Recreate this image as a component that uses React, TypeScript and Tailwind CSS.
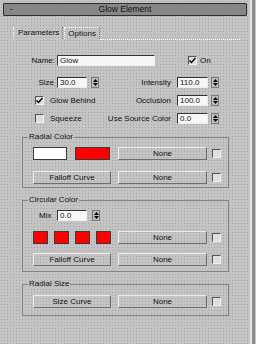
const bg =
  "bg-[#c4c4c4] bg-[radial-gradient(#a4a4a4_0.7px,transparent_0.8px)] bg-[length:3px_3px]";

const Check = ({ on }: { on?: boolean }) => (
  <div className="w-[9px] h-[9px] shrink-0 bg-[#dedede] border border-t-[#555] border-l-[#555] border-b-[#f0f0f0] border-r-[#f0f0f0] flex items-center justify-center">
    {on && (
      <svg width="7" height="7" viewBox="0 0 7 7">
        <path d="M0.5 3.5 L2.5 5.5 L6.5 1" stroke="#000" strokeWidth="1.4" fill="none" />
      </svg>
    )}
  </div>
);

const Arrows = () => (
  <div className="w-[8px] h-[11px] shrink-0 border border-[#7a7a7a] bg-[#bdbdbd] flex flex-col items-center justify-center gap-[1px]">
    <svg width="5" height="3" viewBox="0 0 5 3">
      <path d="M2.5 0 L5 3 L0 3 Z" fill="#000" />
    </svg>
    <svg width="5" height="3" viewBox="0 0 5 3">
      <path d="M0 0 L5 0 L2.5 3 Z" fill="#000" />
    </svg>
  </div>
);

const Field = ({ value, w }: { value: string; w: string }) => (
  <div
    className={`${w} h-[11px] shrink-0 bg-[#f7f7f7] border border-t-[#333] border-l-[#333] border-b-[#eee] border-r-[#eee] pl-[2px] leading-[9px]`}
  >
    {value}
  </div>
);

const Btn = ({ label, w }: { label: string; w: string }) => (
  <div
    className={`${w} h-[13px] shrink-0 border border-t-[#ececec] border-l-[#ececec] border-b-[#6e6e6e] border-r-[#6e6e6e] flex items-center justify-center`}
  >
    {label}
  </div>
);

const Swatch = ({ color, w }: { color: string; w: string }) => (
  <div className={`${w} h-[13px] shrink-0 border border-[#3a3a3a] ${color}`} />
);

const RightSpin = ({ label, value }: { label: string; value: string }) => (
  <div className="flex items-center">
    <div className="w-[73px] text-right pr-[1px]">{label}</div>
    <div className="ml-[5px]">
      <Field value={value} w="w-[31px]" />
    </div>
    <div className="ml-[3px]">
      <Arrows />
    </div>
  </div>
);

const MapRow = ({ left }: { left: React.ReactNode }) => (
  <div className="flex items-center h-[13px]">
    <div className="w-[78px] flex items-center gap-[8px]">{left}</div>
    <div className="ml-[7px]">
      <Btn label="None" w="w-[89px]" />
    </div>
    <div className="ml-[5px]">
      <Check />
    </div>
  </div>
);

const Group = ({ title, className, children }: { title: string; className: string; children: React.ReactNode }) => (
  <div className={`relative ml-[22px] w-[207px] border border-[#858585] pl-[10px] ${className}`}>
    <span className={`absolute left-[5px] -top-[6px] px-[1px] leading-[10px] ${bg}`}>{title}</span>
    {children}
  </div>
);

export default function App() {
  return (
    <div className={`w-[256px] h-[344px] overflow-hidden flex text-[8px] text-[#111] font-['Liberation_Sans',Arial,sans-serif] ${bg}`}>
      <div className="w-[250px] flex flex-col">
        {/* rollout title */}
        <div className="mt-[3px] ml-[3px] w-[244px] h-[13px] border border-[#2e2e2e] rounded-[1px] bg-[#a2a2a2] bg-[radial-gradient(#858585_0.7px,transparent_0.8px)] bg-[length:2px_2px] relative flex items-center justify-center text-[8.5px]">
          <span className="absolute left-[6px] top-[-1px]">-</span>
          <span>Glow Element</span>
        </div>

        {/* tabs */}
        <div className="mt-[11px] ml-[13px] h-[12px] flex items-stretch">
          <div className="border-l border-dotted border-l-white border-r border-r-[#7a7a7a] pl-[4px] pr-[3px] flex items-center">
            Parameters
          </div>
          <div className="ml-[1px] border-l border-t border-dotted border-white border-r border-r-[#7a7a7a] pl-[3px] pr-[3px] flex items-center">
            Options
          </div>
        </div>
        <div className="ml-[100px] w-[140px] border-t border-dotted border-white" />

        {/* name row */}
        <div className="mt-[15px] h-[11px] flex items-center">
          <div className="w-[55px] text-right">Name:</div>
          <div className="ml-[2px]">
            <Field value="Glow" w="w-[98px]" />
          </div>
          <div className="ml-[33px]">
            <Check on />
          </div>
          <span className="ml-[3px]">On</span>
        </div>

        {/* size / intensity */}
        <div className="mt-[11px] h-[11px] flex items-center">
          <div className="w-[54px] text-right">Size</div>
          <div className="ml-[3px]">
            <Field value="30.0" w="w-[30px]" />
          </div>
          <div className="ml-[4px]">
            <Arrows />
          </div>
          <RightSpin label="Intensity" value="110.0" />
        </div>

        {/* glow behind / occlusion */}
        <div className="mt-[7px] h-[11px] flex items-center">
          <div className="w-[99px] pl-[35px] flex items-center">
            <Check on />
            <span className="ml-[6px]">Glow Behind</span>
          </div>
          <RightSpin label="Occlusion" value="100.0" />
        </div>

        {/* squeeze / use source color */}
        <div className="mt-[7px] h-[11px] flex items-center">
          <div className="w-[99px] pl-[35px] flex items-center">
            <Check />
            <span className="ml-[6px]">Squeeze</span>
          </div>
          <RightSpin label="Use Source Color" value="0.0" />
        </div>

        <Group title="Radial Color" className="mt-[13px] pt-[9px] pb-[3px]">
          <MapRow
            left={
              <>
                <Swatch color="bg-white" w="w-[34px]" />
                <Swatch color="bg-[#ff0000]" w="w-[35px]" />
              </>
            }
          />
          <div className="mt-[11px]">
            <MapRow left={<Btn label="Falloff Curve" w="w-[78px]" />} />
          </div>
        </Group>

        <Group title="Circular Color" className="mt-[12px] pt-[9px] pb-[5px]">
          <div className="h-[11px] flex items-center">
            <div className="w-[24px] pl-[6px]">Mix</div>
            <Field value="0.0" w="w-[30px]" />
            <div className="ml-[5px]">
              <Arrows />
            </div>
          </div>
          <div className="mt-[10px]">
            <MapRow
              left={
                <div className="flex gap-[6px]">
                  <Swatch color="bg-[#ff0000]" w="w-[15px]" />
                  <Swatch color="bg-[#ff0000]" w="w-[15px]" />
                  <Swatch color="bg-[#ff0000]" w="w-[15px]" />
                  <Swatch color="bg-[#ff0000]" w="w-[15px]" />
                </div>
              }
            />
          </div>
          <div className="mt-[9px]">
            <MapRow left={<Btn label="Falloff Curve" w="w-[78px]" />} />
          </div>
        </Group>

        <Group title="Radial Size" className="mt-[12px] pt-[10px] pb-[7px]">
          <MapRow left={<Btn label="Size Curve" w="w-[78px]" />} />
        </Group>
      </div>

      {/* scroll strip */}
      <div className="w-[6px] flex">
        <div className="w-[2px] bg-[#e6e6e6]" />
        <div className="w-[3px] bg-[#8c8c8c]" />
      </div>
    </div>
  );
}
